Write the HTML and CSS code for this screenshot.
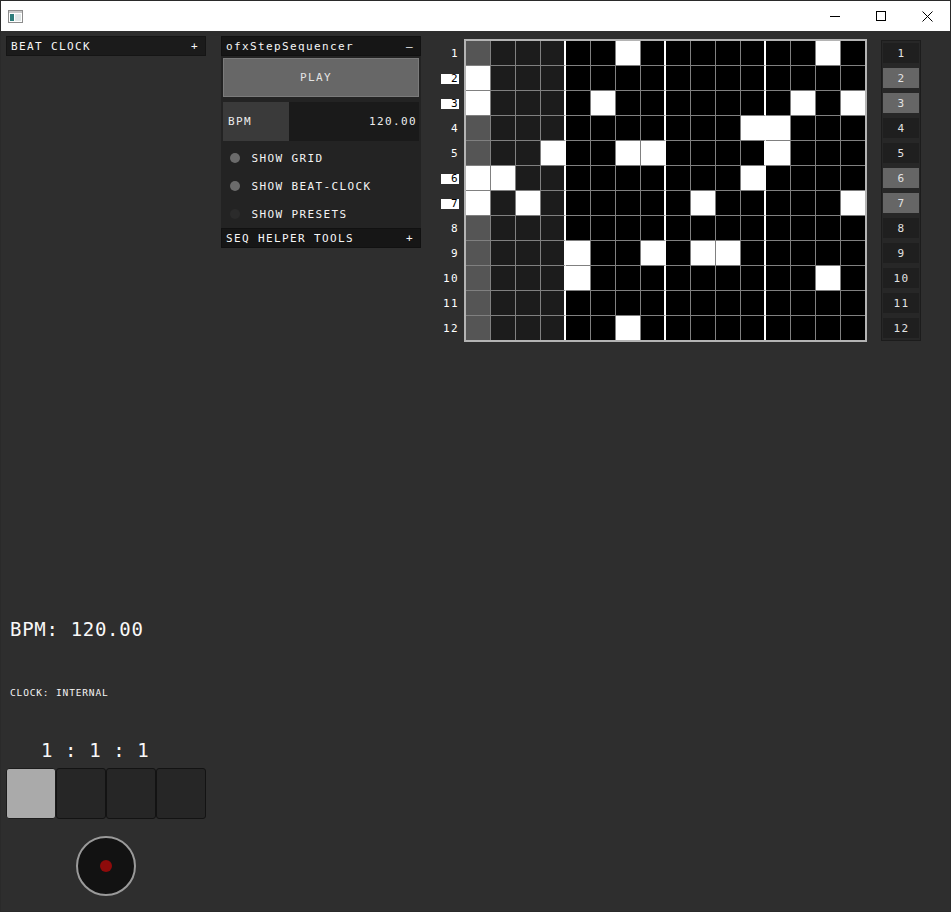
FILE: index.html
```html
<!DOCTYPE html>
<html>
<head>
<meta charset="utf-8">
<title>ofxStepSequencer</title>
<link rel="stylesheet" href="styles.css">
</head>
<body>
<div class="window">
  <div class="titlebar">
    <svg class="app-icon" width="15" height="13" viewBox="0 0 15 13">
      <rect x="0.5" y="0.5" width="14" height="12" fill="#ffffff" stroke="#8c8c8c"/>
      <rect x="1" y="1" width="13" height="2" fill="#c8c8c8"/>
      <rect x="2" y="4" width="4" height="7" fill="#2e7d7a"/>
      <rect x="7" y="4" width="6" height="7" fill="#dfe6e6"/>
    </svg>
    <div class="controls">
      <div class="ctl"><svg width="10" height="10" viewBox="0 0 10 10"><line x1="0" y1="5.5" x2="10" y2="5.5" stroke="#000" stroke-width="1"/></svg></div>
      <div class="ctl"><svg width="10" height="10" viewBox="0 0 10 10"><rect x="0.5" y="0.5" width="9" height="9" fill="none" stroke="#000" stroke-width="1"/></svg></div>
      <div class="ctl"><svg width="11" height="11" viewBox="0 0 11 11"><path d="M0.5 0.5 L10.5 10.5 M10.5 0.5 L0.5 10.5" stroke="#000" stroke-width="1" fill="none"/></svg></div>
    </div>
  </div>
  <div class="main">
    <div class="left-col">
      <div class="gui-header"><span>BEAT CLOCK</span><span>+</span></div>
      <div class="bpm-big">BPM: 120.00</div>
      <div class="clock-src">CLOCK: INTERNAL</div>
      <div class="counter">1 : 1 : 1</div>
      <div class="beats">
        <div class="beat on"></div>
        <div class="beat"></div>
        <div class="beat"></div>
        <div class="beat"></div>
      </div>
      <div class="tick"><div class="tick-dot"></div></div>
    </div>

    <div class="panel">
      <div class="gui-header panel-head"><span>ofxStepSequencer</span><span>–</span></div>
      <div class="panel-body">
        <div class="play-btn">PLAY</div>
        <div class="slider" style="--fill:66px"><span>BPM</span><span>120.00</span></div>
        <div class="toggle"><span class="dot on"></span><span>SHOW GRID</span></div>
        <div class="toggle"><span class="dot on"></span><span>SHOW BEAT-CLOCK</span></div>
        <div class="toggle"><span class="dot"></span><span>SHOW PRESETS</span></div>
      </div>
      <div class="gui-header panel-head sub"><span>SEQ HELPER TOOLS</span><span>+</span></div>
    </div>

    <div class="seq">
      <div class="row-labels">
        <div class="rl"><span>1</span></div>
        <div class="rl hl"><span>2</span></div>
        <div class="rl hl"><span>3</span></div>
        <div class="rl"><span>4</span></div>
        <div class="rl"><span>5</span></div>
        <div class="rl hl"><span>6</span></div>
        <div class="rl hl"><span>7</span></div>
        <div class="rl"><span>8</span></div>
        <div class="rl"><span>9</span></div>
        <div class="rl"><span>10</span></div>
        <div class="rl"><span>11</span></div>
        <div class="rl"><span>12</span></div>
      </div>
      <div class="grid">
        <div class="cell"></div><div class="cell"></div><div class="cell"></div><div class="cell"></div><div class="cell"></div><div class="cell"></div><div class="cell on"></div><div class="cell"></div><div class="cell"></div><div class="cell"></div><div class="cell"></div><div class="cell"></div><div class="cell"></div><div class="cell"></div><div class="cell on"></div><div class="cell"></div>
        <div class="cell on"></div><div class="cell"></div><div class="cell"></div><div class="cell"></div><div class="cell"></div><div class="cell"></div><div class="cell"></div><div class="cell"></div><div class="cell"></div><div class="cell"></div><div class="cell"></div><div class="cell"></div><div class="cell"></div><div class="cell"></div><div class="cell"></div><div class="cell"></div>
        <div class="cell on"></div><div class="cell"></div><div class="cell"></div><div class="cell"></div><div class="cell"></div><div class="cell on"></div><div class="cell"></div><div class="cell"></div><div class="cell"></div><div class="cell"></div><div class="cell"></div><div class="cell"></div><div class="cell"></div><div class="cell on"></div><div class="cell"></div><div class="cell on"></div>
        <div class="cell"></div><div class="cell"></div><div class="cell"></div><div class="cell"></div><div class="cell"></div><div class="cell"></div><div class="cell"></div><div class="cell"></div><div class="cell"></div><div class="cell"></div><div class="cell"></div><div class="cell on"></div><div class="cell on"></div><div class="cell"></div><div class="cell"></div><div class="cell"></div>
        <div class="cell"></div><div class="cell"></div><div class="cell"></div><div class="cell on"></div><div class="cell"></div><div class="cell"></div><div class="cell on"></div><div class="cell on"></div><div class="cell"></div><div class="cell"></div><div class="cell"></div><div class="cell"></div><div class="cell on"></div><div class="cell"></div><div class="cell"></div><div class="cell"></div>
        <div class="cell on"></div><div class="cell on"></div><div class="cell"></div><div class="cell"></div><div class="cell"></div><div class="cell"></div><div class="cell"></div><div class="cell"></div><div class="cell"></div><div class="cell"></div><div class="cell"></div><div class="cell on"></div><div class="cell"></div><div class="cell"></div><div class="cell"></div><div class="cell"></div>
        <div class="cell on"></div><div class="cell"></div><div class="cell on"></div><div class="cell"></div><div class="cell"></div><div class="cell"></div><div class="cell"></div><div class="cell"></div><div class="cell"></div><div class="cell on"></div><div class="cell"></div><div class="cell"></div><div class="cell"></div><div class="cell"></div><div class="cell"></div><div class="cell on"></div>
        <div class="cell"></div><div class="cell"></div><div class="cell"></div><div class="cell"></div><div class="cell"></div><div class="cell"></div><div class="cell"></div><div class="cell"></div><div class="cell"></div><div class="cell"></div><div class="cell"></div><div class="cell"></div><div class="cell"></div><div class="cell"></div><div class="cell"></div><div class="cell"></div>
        <div class="cell"></div><div class="cell"></div><div class="cell"></div><div class="cell"></div><div class="cell on"></div><div class="cell"></div><div class="cell"></div><div class="cell on"></div><div class="cell"></div><div class="cell on"></div><div class="cell on"></div><div class="cell"></div><div class="cell"></div><div class="cell"></div><div class="cell"></div><div class="cell"></div>
        <div class="cell"></div><div class="cell"></div><div class="cell"></div><div class="cell"></div><div class="cell on"></div><div class="cell"></div><div class="cell"></div><div class="cell"></div><div class="cell"></div><div class="cell"></div><div class="cell"></div><div class="cell"></div><div class="cell"></div><div class="cell"></div><div class="cell on"></div><div class="cell"></div>
        <div class="cell"></div><div class="cell"></div><div class="cell"></div><div class="cell"></div><div class="cell"></div><div class="cell"></div><div class="cell"></div><div class="cell"></div><div class="cell"></div><div class="cell"></div><div class="cell"></div><div class="cell"></div><div class="cell"></div><div class="cell"></div><div class="cell"></div><div class="cell"></div>
        <div class="cell"></div><div class="cell"></div><div class="cell"></div><div class="cell"></div><div class="cell"></div><div class="cell"></div><div class="cell on"></div><div class="cell"></div><div class="cell"></div><div class="cell"></div><div class="cell"></div><div class="cell"></div><div class="cell"></div><div class="cell"></div><div class="cell"></div><div class="cell"></div>
      </div>
    </div>

    <div class="presets">
      <div class="preset">1</div>
      <div class="preset hl">2</div>
      <div class="preset hl">3</div>
      <div class="preset">4</div>
      <div class="preset">5</div>
      <div class="preset hl">6</div>
      <div class="preset hl">7</div>
      <div class="preset">8</div>
      <div class="preset">9</div>
      <div class="preset">10</div>
      <div class="preset">11</div>
      <div class="preset">12</div>
    </div>
  </div>
</div>
</body>
</html>
```

FILE: styles.css
```css
* {
  box-sizing: border-box;
  margin: 0;
  padding: 0;
}

html,
body {
  background: #2e2e2e;
}

body {
  width: 951px;
  height: 912px;
  overflow: hidden;
  font-family: "DejaVu Sans Mono", "Liberation Mono", monospace;
  color: #f0f0f0;
}

.window {
  width: 951px;
  height: 912px;
  border: 1px solid #2a2a2a;
  background: #2e2e2e;
  display: flex;
  flex-direction: column;
  overflow: hidden;
}

/* ---------- title bar ---------- */
.titlebar {
  flex: none;
  height: 30px;
  background: #ffffff;
  display: flex;
  align-items: center;
  justify-content: space-between;
}

.app-icon {
  margin-left: 7px;
  display: block;
}

.controls {
  display: flex;
  height: 30px;
}

.ctl {
  width: 46px;
  height: 30px;
  display: flex;
  align-items: center;
  justify-content: center;
}

.ctl svg {
  display: block;
}

/* ---------- main area ---------- */
.main {
  flex: 1;
  display: flex;
  align-items: flex-start;
  padding-left: 5px;
}

.gui-header {
  height: 20px;
  display: flex;
  align-items: center;
  justify-content: space-between;
  padding: 0 6px 0 4px;
  background: #1b1b1b;
  border: 1px solid #151515;
  font-size: 11px;
  letter-spacing: 1.38px;
  color: #f6f6f6;
  white-space: pre;
}

/* ---------- left column (beat clock) ---------- */
.left-col {
  width: 200px;
  margin-top: 5px;
  display: flex;
  flex-direction: column;
}

.bpm-big {
  margin-top: 564px;
  padding-left: 4px;
  font-size: 19px;
  line-height: 19px;
  height: 19px;
  letter-spacing: 0.7px;
  color: #f8f8f8;
  white-space: pre;
}

.clock-src {
  margin-top: 49px;
  padding-left: 4px;
  font-size: 9.5px;
  line-height: 10px;
  height: 10px;
  letter-spacing: 0.85px;
  color: #f4f4f4;
  white-space: pre;
}

.counter {
  margin-top: 43px;
  padding-left: 35px;
  font-size: 19px;
  line-height: 19px;
  height: 19px;
  letter-spacing: 0.6px;
  color: #f8f8f8;
  white-space: pre;
}

.beats {
  margin-top: 8px;
  display: flex;
}

.beat {
  width: 50px;
  height: 51px;
  background: #262626;
  border: 1px solid #131313;
  border-radius: 3px;
}

.beat.on {
  background: #aaaaaa;
  border-color: #1c1c1c;
}

.tick {
  margin-top: 17px;
  align-self: center;
  width: 60px;
  height: 60px;
  border-radius: 50%;
  border: 2px solid #9a9a9a;
  background: #121212;
  display: flex;
  align-items: center;
  justify-content: center;
}

.tick-dot {
  width: 12px;
  height: 12px;
  border-radius: 50%;
  background: #8e0b0b;
}

/* ---------- gui panel ---------- */
.panel {
  width: 200px;
  margin-left: 15px;
  margin-top: 5px;
  background: #232323;
}

.panel-head {
  background: #161616;
  border-color: #111111;
}

.panel-head.sub {
  height: 20px;
}

.panel-body {
  padding: 2px 2px 0 2px;
  display: flex;
  flex-direction: column;
}

.play-btn {
  height: 39px;
  background: #676767;
  border: 1px solid #7b7b7b;
  display: flex;
  align-items: center;
  justify-content: center;
  padding-right: 10px;
  font-size: 11px;
  letter-spacing: 1.38px;
  color: #e4e4e4;
}

.slider {
  margin-top: 5px;
  height: 39px;
  background: linear-gradient(to right, #3a3a3a var(--fill), #1a1a1a var(--fill));
  display: flex;
  align-items: center;
  justify-content: space-between;
  padding: 0 2px 0 5px;
  font-size: 11px;
  letter-spacing: 1.38px;
  color: #ececec;
}

.toggle {
  height: 28px;
  display: flex;
  align-items: center;
  padding-left: 7px;
  font-size: 11px;
  letter-spacing: 1.38px;
  color: #f4f4f4;
  white-space: pre;
}

.slider + .toggle {
  margin-top: 3px;
}

.dot {
  width: 10px;
  height: 10px;
  border-radius: 50%;
  background: #2b2b2b;
  margin-right: 11.5px;
  flex: none;
}

.dot.on {
  background: #6b6b6b;
}

/* ---------- sequencer grid ---------- */
.seq {
  display: flex;
  margin-left: 19px;
  margin-top: 8px;
}

.row-labels {
  width: 20px;
  margin-right: 4px;
  padding-top: 2px;
  display: flex;
  flex-direction: column;
}

.rl {
  height: 25px;
  display: flex;
  align-items: center;
  justify-content: flex-end;
  font-size: 11px;
  letter-spacing: 1.38px;
  color: #ffffff;
}

.rl span {
  display: block;
  margin-right: 1px;
  line-height: 10px;
  height: 10px;
  text-align: right;
}

.rl.hl span {
  width: 18px;
  background: #ffffff;
  color: #000000;
}

.grid {
  display: grid;
  grid-template-columns: repeat(15, 25px) 24px;
  grid-template-rows: repeat(11, 25px) 24px;
  border: 2px solid #b4b4b4;
  background: #000000;
}

.cell {
  background: #000000;
  border-right: 1px solid #808080;
  border-bottom: 1px solid #808080;
}

.cell:nth-child(16n+1) {
  background: #555555;
}

.cell:nth-child(16n+2),
.cell:nth-child(16n+3),
.cell:nth-child(16n+4) {
  background: #1c1c1c;
}

.cell:nth-child(4n) {
  border-right: 2px solid #ffffff;
}

.cell:nth-child(16n) {
  border-right: none;
}

.cell:nth-child(n+177) {
  border-bottom: none;
}

.cell.on {
  background: #ffffff;
}

/* ---------- presets ---------- */
.presets {
  width: 40px;
  margin-left: 14px;
  margin-top: 9px;
  padding: 2px 1px;
  background: #272727;
  border: 1px solid #1c1c1c;
  display: flex;
  flex-direction: column;
  gap: 5px;
}

.preset {
  height: 20px;
  background: #1f1f1f;
  display: flex;
  align-items: center;
  justify-content: center;
  padding-left: 1px;
  font-size: 11px;
  letter-spacing: 1.38px;
  color: #e2e2e2;
}

.preset.hl {
  background: #666666;
}
```
